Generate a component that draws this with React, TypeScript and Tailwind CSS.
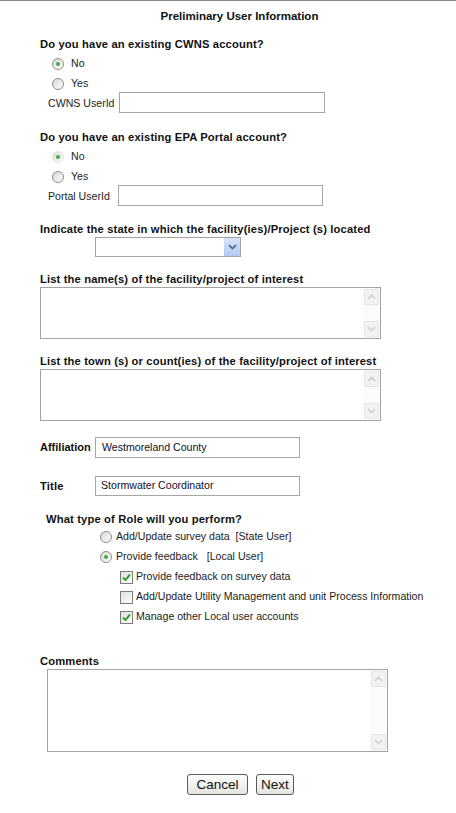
import type { ReactNode } from 'react';

function Radio({ checked = false, faint = false }: { checked?: boolean; faint?: boolean }) {
  return (
    <span
      className={`inline-flex h-[12px] w-[12px] shrink-0 items-center justify-center rounded-full border bg-gradient-to-br from-[#d9d9d2] to-white ${
        faint ? 'border-[#e4e4e4]' : 'border-[#8c8d8d]'
      }`}
    >
      {checked && <span className="h-[4px] w-[4px] rounded-full bg-[#3cae3c]" />}
    </span>
  );
}

function Checkbox({ checked = false }: { checked?: boolean }) {
  return (
    <span className="inline-flex h-[13px] w-[13px] shrink-0 items-center justify-center border border-[#7b7b7b] bg-gradient-to-br from-[#dedede] to-white">
      {checked && (
        <svg width="11" height="11" viewBox="0 0 11 11">
          <path d="M2 5.5 L4.5 8 L9 2.5" fill="none" stroke="#3a9e3a" strokeWidth="2" />
        </svg>
      )}
    </span>
  );
}

function Chevron({ up = false, color }: { up?: boolean; color: string }) {
  return (
    <svg width="9" height="6" viewBox="0 0 9 6">
      <path d={up ? 'M1 5 L4.5 1.5 L8 5' : 'M1 1 L4.5 4.5 L8 1'} fill="none" stroke={color} strokeWidth="1.6" />
    </svg>
  );
}

function ScrollBox({ className }: { className: string }) {
  return (
    <div className={`flex border border-[#a3a3a3] bg-white ${className}`}>
      <div className="flex-1" />
      <div className="flex w-[17px] flex-col justify-between bg-[#fbfbfb] p-[1px]">
        <div className="flex h-[16px] items-center justify-center rounded-[2px] border border-[#e6e6e6] bg-[#f2f2f2]">
          <Chevron up color="#cfcfcf" />
        </div>
        <div className="flex h-[16px] items-center justify-center rounded-[2px] border border-[#e6e6e6] bg-[#f2f2f2]">
          <Chevron color="#cfcfcf" />
        </div>
      </div>
    </div>
  );
}

function Heading({ children, className = '' }: { children: ReactNode; className?: string }) {
  return (
    <div className={`h-[14px] text-[11.2px] font-bold leading-[14px] tracking-[0.15px] text-[#111] ${className}`}>
      {children}
    </div>
  );
}

function OptionRow({ children }: { children: ReactNode }) {
  return <div className="flex h-[20px] items-center">{children}</div>;
}

export default function App() {
  return (
    <div className="min-h-[813px] w-[456px] border-t border-[#8a8a8a] bg-white font-['Liberation_Sans',Arial,sans-serif] text-[10.6px] text-[#1c1c1c]">
      <div className="mt-[8px] flex h-[14px] justify-center pl-[23px] text-[11.5px] font-bold leading-[14px] text-[#111]">
        Preliminary User Information
      </div>

      <div className="pl-[40px]">
        <Heading className="mt-[14px]">Do you have an existing CWNS account?</Heading>
        <div className="mt-[3px] pl-[12px]">
          <OptionRow>
            <Radio checked />
            <span className="ml-[7px]">No</span>
          </OptionRow>
          <OptionRow>
            <Radio />
            <span className="ml-[7px]">Yes</span>
          </OptionRow>
        </div>
        <div className="-mt-[2px] flex h-[21px] items-end pl-[8px]">
          <span className="w-[71px] pb-[1px]">CWNS UserId</span>
          <div className="h-[21px] w-[206px] border border-[#a6a6a6]" />
        </div>

        <Heading className="mt-[17px]">Do you have an existing EPA Portal account?</Heading>
        <div className="mt-[3px] pl-[12px]">
          <OptionRow>
            <Radio checked faint />
            <span className="ml-[7px]">No</span>
          </OptionRow>
          <OptionRow>
            <Radio />
            <span className="ml-[7px]">Yes</span>
          </OptionRow>
        </div>
        <div className="-mt-[2px] flex h-[21px] items-end pl-[8px]">
          <span className="w-[70px] pb-[1px]">Portal UserId</span>
          <div className="h-[21px] w-[205px] border border-[#a6a6a6]" />
        </div>

        <Heading className="mt-[16px]">Indicate the state in which the facility(ies)/Project (s) located</Heading>
        <div className="ml-[55px] mt-[1px] flex h-[20px] w-[146px] border border-[#a3a3a3] bg-white">
          <div className="flex-1" />
          <div className="flex w-[16px] items-center justify-center bg-gradient-to-b from-[#d6e3fc] to-[#b5c9f5]">
            <Chevron color="#4a5f8c" />
          </div>
        </div>

        <Heading className="mt-[15px]">List the name(s) of the facility/project of interest</Heading>
        <ScrollBox className="mt-[1px] h-[52px] w-[341px]" />

        <Heading className="mt-[15px]">List the town (s) or count(ies) of the facility/project of interest</Heading>
        <ScrollBox className="mt-[1px] h-[52px] w-[341px]" />

        <div className="mt-[16px] flex h-[21px] items-center">
          <span className="w-[55px] pb-[1px] text-[11px] font-bold text-[#111]">Affiliation</span>
          <div className="flex h-[21px] w-[205px] items-center border border-[#a6a6a6] pl-[6px] text-[#10102a]">
            Westmoreland County
          </div>
        </div>
        <div className="mt-[18px] flex h-[20px] items-center">
          <span className="w-[55px] text-[11.2px] font-bold tracking-[0.15px] text-[#111]">Title</span>
          <div className="flex h-[20px] w-[205px] items-center border border-[#a6a6a6] pl-[5px] text-[#10102a]">
            Stormwater Coordinator
          </div>
        </div>

        <Heading className="ml-[6px] mt-[16px]">What type of Role will you perform?</Heading>
        <div className="mt-[1px] pl-[60px]">
          <OptionRow>
            <Radio />
            <span className="ml-[4px]">Add/Update survey data&nbsp;&nbsp;[State User]</span>
          </OptionRow>
          <OptionRow>
            <Radio checked />
            <span className="ml-[4px]">Provide feedback&nbsp;&nbsp;&nbsp;[Local User]</span>
          </OptionRow>
          <div className="pl-[20px]">
            <OptionRow>
              <Checkbox checked />
              <span className="ml-[3px]">Provide feedback on survey data</span>
            </OptionRow>
            <OptionRow>
              <Checkbox />
              <span className="ml-[3px]">Add/Update Utility Management and unit Process Information</span>
            </OptionRow>
            <OptionRow>
              <Checkbox checked />
              <span className="ml-[3px]">Manage other Local user accounts</span>
            </OptionRow>
          </div>
        </div>

        <Heading className="mt-[27px]">Comments</Heading>
        <ScrollBox className="ml-[7px] mt-[1px] h-[83px] w-[341px]" />
      </div>

      <div className="mt-[22px] flex gap-[8px] pl-[187px]">
        <button className="h-[21px] w-[61px] rounded-[3px] border border-[#5a5a5a] bg-gradient-to-b from-white to-[#e4e4e0] text-[13.5px] leading-none text-[#111]">
          Cancel
        </button>
        <button className="h-[21px] w-[38px] rounded-[3px] border border-[#5a5a5a] bg-gradient-to-b from-white to-[#e4e4e0] text-[13.5px] leading-none text-[#111]">
          Next
        </button>
      </div>
    </div>
  );
}
